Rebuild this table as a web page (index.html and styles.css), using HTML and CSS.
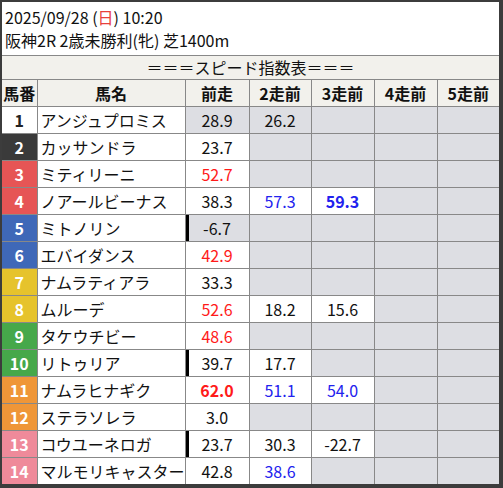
FILE: index.html
```html
<!DOCTYPE html>
<html lang="ja">
<head>
<meta charset="utf-8">
<link rel="stylesheet" href="styles.css">
</head>
<body>
<div class="frame">
  <div class="title">
    <div>2025/09/28 (<span class="sun">日</span>) 10:20</div>
    <div>阪神2R 2歳未勝利(牝) 芝1400m</div>
  </div>
  <table class="grid">
    <colgroup>
      <col class="c-no"><col class="c-name"><col class="c-r1"><col class="c-r2"><col class="c-r3"><col class="c-r4"><col class="c-r5">
    </colgroup>
    <tr class="cap"><td colspan="7">＝＝＝スピード指数表＝＝＝</td></tr>
    <tr class="head"><th>馬番</th><th>馬名</th><th>前走</th><th>2走前</th><th>3走前</th><th>4走前</th><th>5走前</th></tr>
    <tr><td class="no w1">1</td><td class="name">アンジュプロミス</td><td class="g">28.9</td><td class="g">26.2</td><td class="g"></td><td class="g"></td><td class="g"></td></tr>
    <tr><td class="no w2">2</td><td class="name">カッサンドラ</td><td>23.7</td><td class="g"></td><td class="g"></td><td class="g"></td><td class="g"></td></tr>
    <tr><td class="no w3">3</td><td class="name">ミティリーニ</td><td class="red">52.7</td><td class="g"></td><td class="g"></td><td class="g"></td><td class="g"></td></tr>
    <tr><td class="no w3">4</td><td class="name">ノアールビーナス</td><td>38.3</td><td class="blue">57.3</td><td class="blue b">59.3</td><td class="g"></td><td class="g"></td></tr>
    <tr><td class="no w4">5</td><td class="name">ミトノリン</td><td class="g mark">-6.7</td><td class="g"></td><td class="g"></td><td class="g"></td><td class="g"></td></tr>
    <tr><td class="no w4">6</td><td class="name">エバイダンス</td><td class="red">42.9</td><td class="g"></td><td class="g"></td><td class="g"></td><td class="g"></td></tr>
    <tr><td class="no w5">7</td><td class="name">ナムラティアラ</td><td>33.3</td><td class="g"></td><td class="g"></td><td class="g"></td><td class="g"></td></tr>
    <tr><td class="no w5">8</td><td class="name">ムルーデ</td><td class="red">52.6</td><td>18.2</td><td>15.6</td><td class="g"></td><td class="g"></td></tr>
    <tr><td class="no w6">9</td><td class="name">タケウチビー</td><td class="red">48.6</td><td class="g"></td><td class="g"></td><td class="g"></td><td class="g"></td></tr>
    <tr><td class="no w6">10</td><td class="name">リトゥリア</td><td class="mark">39.7</td><td>17.7</td><td class="g"></td><td class="g"></td><td class="g"></td></tr>
    <tr><td class="no w7">11</td><td class="name">ナムラヒナギク</td><td class="red b">62.0</td><td class="blue">51.1</td><td class="blue">54.0</td><td class="g"></td><td class="g"></td></tr>
    <tr><td class="no w7">12</td><td class="name">ステラソレラ</td><td>3.0</td><td class="g"></td><td class="g"></td><td class="g"></td><td class="g"></td></tr>
    <tr><td class="no w8">13</td><td class="name">コウユーネロガ</td><td class="mark">23.7</td><td>30.3</td><td>-22.7</td><td class="g"></td><td class="g"></td></tr>
    <tr><td class="no w8">14</td><td class="name">マルモリキャスター</td><td>42.8</td><td class="blue">38.6</td><td class="g"></td><td class="g"></td><td class="g"></td></tr>
  </table>
</div>
</body>
</html>
```

FILE: styles.css
```css
html, body {
  margin: 0;
  padding: 0;
  background: #ffffff;
}
body {
  font-family: "Noto Sans CJK JP", "Noto Sans", sans-serif;
  font-size: 16px;
  color: #111;
}
.frame {
  width: 503px;
  height: 488px;
  box-sizing: border-box;
  border-style: solid;
  border-color: #3c3c3c;
  border-width: 2px 4px 4px 2px;
  background: #ffffff;
  overflow: hidden;
}
.title {
  padding: 4px 0 3px 3px;
  line-height: 23px;
  border-bottom: 1px solid #888;
}
.sun {
  color: #e8403c;
}
.grid {
  border-collapse: collapse;
  table-layout: fixed;
  width: 497px;
}
.c-no { width: 35px; }
.c-name { width: 148px; }
.c-r1 { width: 64px; }
.c-r2 { width: 62px; }
.c-r3 { width: 63px; }
.c-r4 { width: 63px; }
.c-r5 { width: 62px; }
.grid td, .grid th {
  border: 1px solid #888;
  padding: 0;
  height: 26px;
  line-height: 26px;
  text-align: center;
  white-space: nowrap;
  overflow: hidden;
}
.grid tr:first-child td {
  border-top: none;
}
.grid tr td:first-child, .grid tr th:first-child {
  border-left: none;
}
.grid tr td:last-child, .grid tr th:last-child {
  border-right: none;
}
.grid tr:last-child td {
  border-bottom: none;
}
.cap td {
  background: #f2f1ec;
  height: 23px;
  line-height: 23px;
}
.head th {
  background: #f2f1ec;
  font-weight: bold;
}
.no {
  font-weight: bold;
  color: #fff;
}
.w1 { background: #fff; color: #222; }
.w2 { background: #3a3a3a; }
.w3 { background: #e65555; }
.w4 { background: #3f68b8; }
.w5 { background: #e6c32c; }
.w6 { background: #46a84a; }
.w7 { background: #ef9638; }
.w8 { background: #ef8a9a; }
.grid td.name {
  text-align: left;
  padding-left: 3px;
}
.g { background: #dddee3; }
.red { color: #ff1a1a; }
.blue { color: #2222ee; }
.b { font-weight: bold; }
.mark { box-shadow: inset 3px 0 0 #000; }
```
